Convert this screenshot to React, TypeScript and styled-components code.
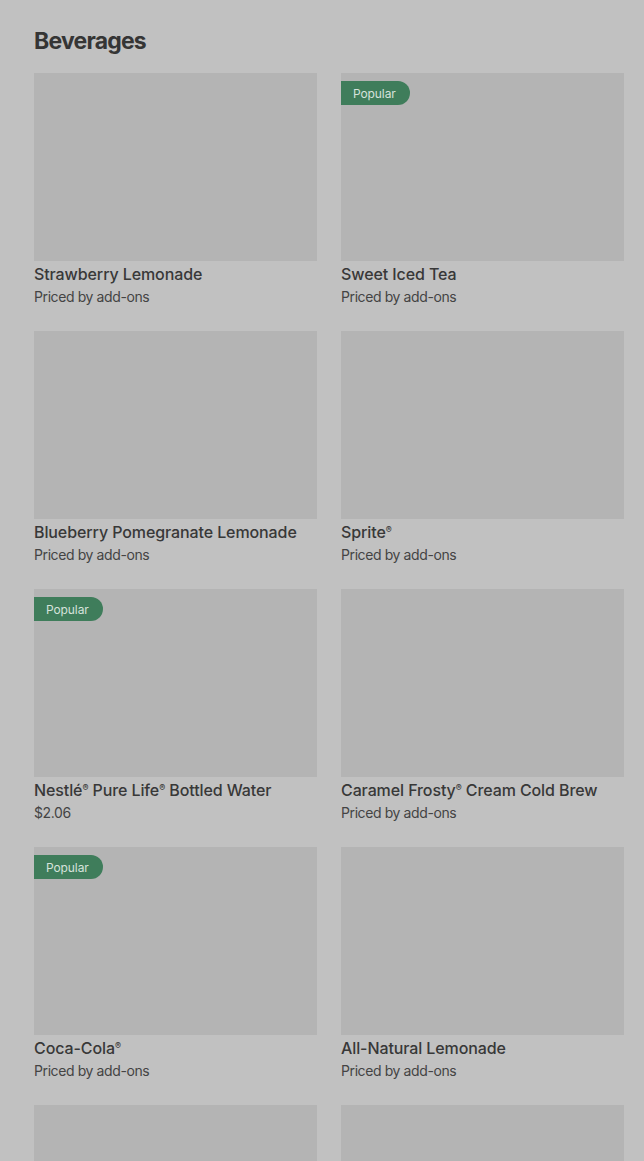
import React from "react";
import styled, { createGlobalStyle } from "styled-components";

const Global = createGlobalStyle`
  html, body { margin: 0; padding: 0; background: #c1c1c1; }
  body { font-family: Inter, "Noto Sans", sans-serif; color: #363636; overflow: hidden; }
`;

const Page = styled.div`
  padding: 25px 20px 0 34px;
  height: 1161px;
  box-sizing: border-box;
  overflow: hidden;
`;

const Heading = styled.h2`
  margin: 0 0 16px;
  font-size: 23px;
  line-height: 32px;
  font-weight: 700;
  letter-spacing: -0.8px;
  color: #353535;
`;

const Grid = styled.div`
  display: grid;
  grid-template-columns: 1fr 1fr;
  column-gap: 24px;
  row-gap: 24px;
`;

const Card = styled.div`
  display: flex;
  flex-direction: column;
`;

const Thumb = styled.div`
  position: relative;
  height: 188px;
  background: #b4b4b4;
`;

const Badge = styled.span`
  position: absolute;
  top: 8px;
  left: 0;
  height: 24px;
  padding: 0 14px 0 12px;
  display: flex;
  align-items: center;
  background: #3f7d5b;
  color: #d6e2db;
  font-size: 12px;
  letter-spacing: -0.1px;
  border-radius: 0 12px 12px 0;
`;

const Name = styled.div`
  margin-top: 3px;
  font-size: 16px;
  line-height: 20px;
  font-weight: 500;
  color: #383838;
  letter-spacing: -0.1px;
  white-space: nowrap;
`;

const Sub = styled.div`
  margin-top: 3px;
  font-size: 14px;
  line-height: 20px;
  color: #444;
  letter-spacing: -0.4px;
`;

const Sup = styled.sup`
  font-size: 9px;
  vertical-align: 5px;
  line-height: 0;
`;

type Item = { name?: React.ReactNode; sub?: string; popular?: boolean };

const R = () => <Sup>®</Sup>;

const items: Item[] = [
  { name: "Strawberry Lemonade", sub: "Priced by add-ons" },
  { name: "Sweet Iced Tea", sub: "Priced by add-ons", popular: true },
  { name: "Blueberry Pomegranate Lemonade", sub: "Priced by add-ons" },
  { name: <>Sprite<R /></>, sub: "Priced by add-ons" },
  { name: <>Nestlé<R /> Pure Life<R /> Bottled Water</>, sub: "$2.06", popular: true },
  { name: <>Caramel Frosty<R /> Cream Cold Brew</>, sub: "Priced by add-ons" },
  { name: <>Coca-Cola<R /></>, sub: "Priced by add-ons", popular: true },
  { name: "All-Natural Lemonade", sub: "Priced by add-ons" },
  {},
  {},
];

export default function App() {
  return (
    <>
      <Global />
      <Page>
        <Heading>Beverages</Heading>
        <Grid>
          {items.map((it, i) => (
            <Card key={i}>
              <Thumb>{it.popular && <Badge>Popular</Badge>}</Thumb>
              {it.name && <Name>{it.name}</Name>}
              {it.sub && <Sub>{it.sub}</Sub>}
            </Card>
          ))}
        </Grid>
      </Page>
    </>
  );
}
